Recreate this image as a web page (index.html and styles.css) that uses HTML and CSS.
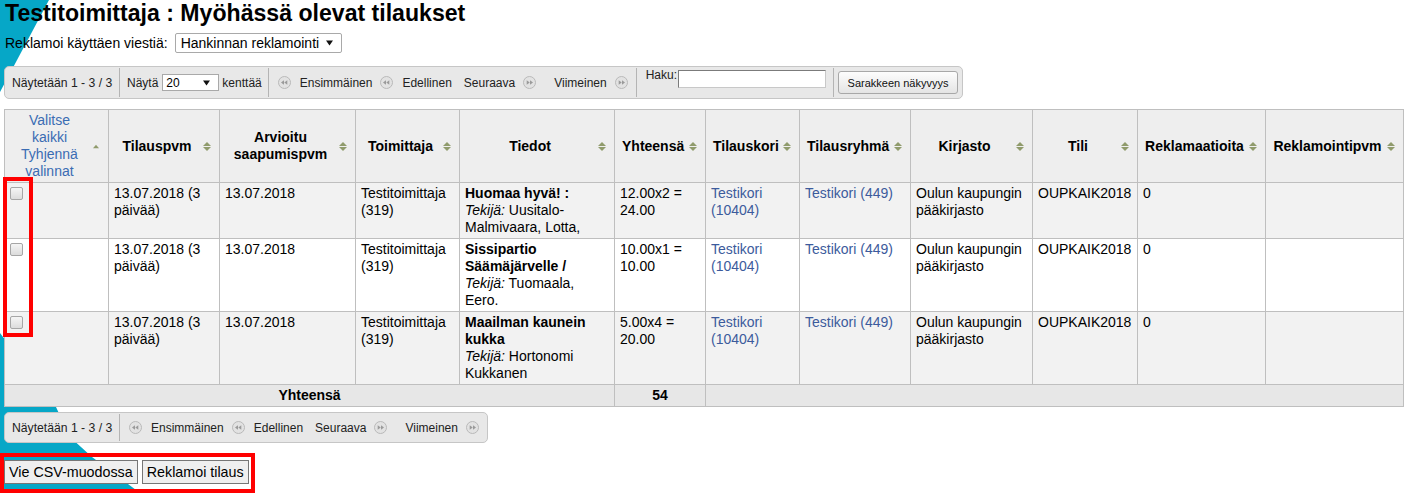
FILE: index.html
```html
<!DOCTYPE html>
<html lang="fi">
<head>
<meta charset="utf-8">
<title>Testitoimittaja : Myöhässä olevat tilaukset</title>
<link rel="stylesheet" href="styles.css">
</head>
<body>
<div class="bg-shape bg-top"></div>
<div class="bg-shape bg-bottom"></div>

<main class="page">
  <h1 class="title">Testitoimittaja : Myöhässä olevat tilaukset</h1>

  <div class="claim-row">
    <span class="claim-label">Reklamoi käyttäen viestiä:</span>
    <div class="select select-letter"><span>Hankinnan reklamointi</span><svg class="caret" width="7" height="6" viewBox="0 0 7 6"><path d="M0 .5h7L3.5 5.5z"/></svg></div>
  </div>

  <div class="toolbar toolbar-top">
    <div class="tb-section tb-info">Näytetään 1 - 3 / 3</div>
    <div class="tb-section tb-length"><span>Näytä</span><div class="select select-len"><span>20</span><svg class="caret" width="7" height="6" viewBox="0 0 7 6"><path d="M0 .5h7L3.5 5.5z"/></svg></div><span>kenttää</span></div>
    <div class="tb-section tb-paginate">
      <span class="pg-btn pg-first"><svg class="pg-ico" width="13" height="13" viewBox="0 0 13 13"><circle class="pg-c" cx="6.5" cy="6.5" r="6"/><path class="pg-a" d="M3 6.5 6 4.3v4.4z M6.3 6.5 9.3 4.3v4.4z"/></svg><span>Ensimmäinen</span></span>
      <span class="pg-btn pg-prev"><svg class="pg-ico" width="13" height="13" viewBox="0 0 13 13"><circle class="pg-c" cx="6.5" cy="6.5" r="6"/><path class="pg-a" d="M3 6.5 6 4.3v4.4z M6.3 6.5 9.3 4.3v4.4z"/></svg><span>Edellinen</span></span>
      <span class="pg-btn pg-next"><span>Seuraava</span><svg class="pg-ico" width="13" height="13" viewBox="0 0 13 13"><circle class="pg-c" cx="6.5" cy="6.5" r="6"/><path class="pg-a" d="M10 6.5 7 4.3v4.4z M6.7 6.5 3.7 4.3v4.4z"/></svg></span>
      <span class="pg-btn pg-last"><span>Viimeinen</span><svg class="pg-ico" width="13" height="13" viewBox="0 0 13 13"><circle class="pg-c" cx="6.5" cy="6.5" r="6"/><path class="pg-a" d="M10 6.5 7 4.3v4.4z M6.7 6.5 3.7 4.3v4.4z"/></svg></span>
    </div>
    <div class="tb-section tb-filter"><label class="search-label" for="haku">Haku:</label><input id="haku" class="search" type="text"></div>
    <div class="tb-section tb-colvis"><button class="colvis-btn" type="button">Sarakkeen näkyvyys</button></div>
  </div>

  <table class="orders">
    <colgroup>
      <col class="c1"><col class="c2"><col class="c3"><col class="c4"><col class="c5"><col class="c6">
      <col class="c7"><col class="c8"><col class="c9"><col class="c10"><col class="c11"><col class="c12">
    </colgroup>
    <thead>
      <tr>
        <th><div class="th-in"><span class="th-txt th-links"><a href="#">Valitse kaikki</a><br><a href="#">Tyhjennä valinnat</a></span><svg class="sort" width="8" height="9" viewBox="0 0 8 9"><path d="M1 6.2 4 2.8 7 6.2z"/></svg></div></th>
        <th><div class="th-in"><span class="th-txt">Tilauspvm</span><svg class="sort" width="8" height="9" viewBox="0 0 8 9"><path d="M0 4 4 0 8 4z M0 5h8L4 9z"/></svg></div></th>
        <th><div class="th-in"><span class="th-txt">Arvioitu saapumispvm</span><svg class="sort" width="8" height="9" viewBox="0 0 8 9"><path d="M0 4 4 0 8 4z M0 5h8L4 9z"/></svg></div></th>
        <th><div class="th-in"><span class="th-txt">Toimittaja</span><svg class="sort" width="8" height="9" viewBox="0 0 8 9"><path d="M0 4 4 0 8 4z M0 5h8L4 9z"/></svg></div></th>
        <th><div class="th-in"><span class="th-txt">Tiedot</span><svg class="sort" width="8" height="9" viewBox="0 0 8 9"><path d="M0 4 4 0 8 4z M0 5h8L4 9z"/></svg></div></th>
        <th><div class="th-in"><span class="th-txt">Yhteensä</span><svg class="sort" width="8" height="9" viewBox="0 0 8 9"><path d="M0 4 4 0 8 4z M0 5h8L4 9z"/></svg></div></th>
        <th><div class="th-in"><span class="th-txt">Tilauskori</span><svg class="sort" width="8" height="9" viewBox="0 0 8 9"><path d="M0 4 4 0 8 4z M0 5h8L4 9z"/></svg></div></th>
        <th><div class="th-in"><span class="th-txt">Tilausryhmä</span><svg class="sort" width="8" height="9" viewBox="0 0 8 9"><path d="M0 4 4 0 8 4z M0 5h8L4 9z"/></svg></div></th>
        <th><div class="th-in"><span class="th-txt">Kirjasto</span><svg class="sort" width="8" height="9" viewBox="0 0 8 9"><path d="M0 4 4 0 8 4z M0 5h8L4 9z"/></svg></div></th>
        <th><div class="th-in"><span class="th-txt">Tili</span><svg class="sort" width="8" height="9" viewBox="0 0 8 9"><path d="M0 4 4 0 8 4z M0 5h8L4 9z"/></svg></div></th>
        <th><div class="th-in"><span class="th-txt">Reklamaatioita</span><svg class="sort" width="8" height="9" viewBox="0 0 8 9"><path d="M0 4 4 0 8 4z M0 5h8L4 9z"/></svg></div></th>
        <th><div class="th-in"><span class="th-txt">Reklamointipvm</span><svg class="sort" width="8" height="9" viewBox="0 0 8 9"><path d="M0 4 4 0 8 4z M0 5h8L4 9z"/></svg></div></th>
      </tr>
    </thead>
    <tbody>
      <tr>
        <td><input class="chk" type="checkbox"></td>
        <td>13.07.2018 (3 päivää)</td>
        <td>13.07.2018</td>
        <td>Testitoimittaja (319)</td>
        <td><b>Huomaa hyvä! :</b><br><i>Tekijä:</i> Uusitalo-Malmivaara, Lotta,</td>
        <td>12.00x2 = 24.00</td>
        <td><a href="#">Testikori (10404)</a></td>
        <td><a href="#">Testikori (449)</a></td>
        <td>Oulun kaupungin pääkirjasto</td>
        <td class="nowrap">OUPKAIK2018</td>
        <td>0</td>
        <td></td>
      </tr>
      <tr>
        <td><input class="chk" type="checkbox"></td>
        <td>13.07.2018 (3 päivää)</td>
        <td>13.07.2018</td>
        <td>Testitoimittaja (319)</td>
        <td><b>Sissipartio Säämäjärvelle /</b><br><i>Tekijä:</i> Tuomaala, Eero.</td>
        <td>10.00x1 = 10.00</td>
        <td><a href="#">Testikori (10404)</a></td>
        <td><a href="#">Testikori (449)</a></td>
        <td>Oulun kaupungin pääkirjasto</td>
        <td class="nowrap">OUPKAIK2018</td>
        <td>0</td>
        <td></td>
      </tr>
      <tr>
        <td><input class="chk" type="checkbox"></td>
        <td>13.07.2018 (3 päivää)</td>
        <td>13.07.2018</td>
        <td>Testitoimittaja (319)</td>
        <td><b>Maailman kaunein kukka</b><br><i>Tekijä:</i> Hortonomi Kukkanen</td>
        <td>5.00x4 = 20.00</td>
        <td><a href="#">Testikori (10404)</a></td>
        <td><a href="#">Testikori (449)</a></td>
        <td>Oulun kaupungin pääkirjasto</td>
        <td class="nowrap">OUPKAIK2018</td>
        <td>0</td>
        <td></td>
      </tr>
    </tbody>
    <tfoot>
      <tr>
        <th colspan="5" class="tf-center">Yhteensä</th>
        <th class="tf-center">54</th>
        <td colspan="6"></td>
      </tr>
    </tfoot>
  </table>

  <div class="toolbar toolbar-bottom">
    <div class="tb-section tb-info">Näytetään 1 - 3 / 3</div>
    <div class="tb-section tb-paginate">
      <span class="pg-btn pg-first"><svg class="pg-ico" width="13" height="13" viewBox="0 0 13 13"><circle class="pg-c" cx="6.5" cy="6.5" r="6"/><path class="pg-a" d="M3 6.5 6 4.3v4.4z M6.3 6.5 9.3 4.3v4.4z"/></svg><span>Ensimmäinen</span></span>
      <span class="pg-btn pg-prev"><svg class="pg-ico" width="13" height="13" viewBox="0 0 13 13"><circle class="pg-c" cx="6.5" cy="6.5" r="6"/><path class="pg-a" d="M3 6.5 6 4.3v4.4z M6.3 6.5 9.3 4.3v4.4z"/></svg><span>Edellinen</span></span>
      <span class="pg-btn pg-next"><span>Seuraava</span><svg class="pg-ico" width="13" height="13" viewBox="0 0 13 13"><circle class="pg-c" cx="6.5" cy="6.5" r="6"/><path class="pg-a" d="M10 6.5 7 4.3v4.4z M6.7 6.5 3.7 4.3v4.4z"/></svg></span>
      <span class="pg-btn pg-last"><span>Viimeinen</span><svg class="pg-ico" width="13" height="13" viewBox="0 0 13 13"><circle class="pg-c" cx="6.5" cy="6.5" r="6"/><path class="pg-a" d="M10 6.5 7 4.3v4.4z M6.7 6.5 3.7 4.3v4.4z"/></svg></span>
    </div>
  </div>

  <div class="actions">
    <button class="action-btn" type="button">Vie CSV-muodossa</button>
    <button class="action-btn" type="button">Reklamoi tilaus</button>
  </div>
</main>

<div class="annot annot-checks"></div>
<div class="annot annot-actions"></div>
</body>
</html>
```

FILE: styles.css
```css
* { box-sizing: border-box; }

html, body {
  margin: 0;
  padding: 0;
  overflow: hidden;
}

body {
  position: relative;
  min-height: 493px;
  font-family: "Liberation Sans", Arial, sans-serif;
  font-size: 14px;
  color: #000;
  background: #fff;
}

/* decorative background shapes */
.bg-shape {
  position: absolute;
  left: 0;
  z-index: 0;
  background: #06a7c7;
}
.bg-top {
  top: 0;
  width: 49px;
  height: 92px;
  clip-path: polygon(0 0, 100% 0, 0 100%);
}
.bg-bottom {
  top: 333px;
  width: 140px;
  height: 160px;
  clip-path: polygon(0 0, 56px 74px, 70px 104px, 92px 124px, 140px 160px, 0 160px);
}

.page {
  position: relative;
  z-index: 1;
  padding: 0 4px;
}

.title {
  margin: 0;
  padding-left: 1px;
  font-size: 23.1px;
  line-height: 26px;
  font-weight: bold;
}

.claim-row {
  display: flex;
  align-items: center;
  height: 20px;
  margin-top: 7px;
  padding-left: 1px;
}

.select {
  display: inline-flex;
  align-items: center;
  justify-content: space-between;
  background: #fff;
  border: 1px solid #a9a9a9;
  color: #000;
}
.caret { fill: #111; flex: none; }

.select-letter {
  width: 167px;
  height: 20px;
  margin-left: 7px;
  padding: 0 8px 0 5px;
  border-radius: 2px;
  font-size: 14px;
}

/* toolbars */
.toolbar {
  display: flex;
  align-items: stretch;
  width: max-content;
  background: #e8e8e8;
  border: 1px solid #c6c6c6;
  border-radius: 5px;
  font-size: 12px;
  color: #222;
}
.toolbar-top { margin-top: 13px; height: 33px; }
.toolbar-bottom { margin-top: 5px; height: 31px; }

.tb-section {
  display: flex;
  align-items: center;
  white-space: nowrap;
}
.tb-section + .tb-section {
  border-left: 1px solid #b4b4b4;
  margin: 1px 0;
}

.tb-info {
  width: 114px;
  font-size: 12.2px;
  padding: 0 0 0 7px;
  overflow: hidden;
}
.tb-length { padding: 0 6px 0 7px; }

.select-len {
  width: 57px;
  height: 17px;
  margin: 0 3px 0 4px;
  padding: 0 8px 0 3px;
  font-size: 12px;
}

.tb-paginate { padding: 0 8px 0 9px; }
.pg-btn { display: flex; align-items: center; gap: 9px; color: #222; }
.pg-first { margin-right: 8px; }
.pg-prev { margin-right: 12px; }
.pg-next { margin-right: 18px; gap: 8px; }
.pg-last { gap: 8px; }
.pg-ico { flex: none; display: block; }
.pg-c { fill: #e2e2e2; stroke: #b9b9b9; stroke-width: 1; }
.pg-a { fill: #9a9a9a; }

.tb-filter {
  padding: 0 7px 0 9px;
  align-items: flex-start;
}
.search-label { line-height: 14px; margin-top: 0; }
.search {
  width: 148px;
  height: 18px;
  margin: 2px 0 0 1px;
  padding: 0 2px;
  border: 1px solid;
  border-color: #7b7b7b #c8c8c8 #c8c8c8 #7b7b7b;
  background: #fff;
  font: 12px "Liberation Sans", Arial, sans-serif;
}

.tb-colvis { padding: 0 4px; }
.colvis-btn {
  width: 120px;
  height: 23px;
  padding: 0;
  font: 11px "Liberation Sans", Arial, sans-serif;
  color: #111;
  border: 1px solid #a8a8a8;
  border-radius: 3px;
  background: linear-gradient(#fdfdfd, #e4e4e4);
}

/* table */
.orders {
  margin-top: 10px;
  border-collapse: collapse;
  table-layout: fixed;
  width: 1399px;
}
.c1 { width: 104px; }
.c2 { width: 111px; }
.c3 { width: 136px; }
.c4 { width: 104px; }
.c5 { width: 155px; }
.c6 { width: 91px; }
.c7 { width: 94px; }
.c8 { width: 111px; }
.c9 { width: 122px; }
.c10 { width: 105px; }
.c11 { width: 128px; }
.c12 { width: 138px; }

.orders th,
.orders td {
  border: 1px solid #bfbfbf;
  padding: 2px 5px;
  line-height: 17px;
  vertical-align: top;
  text-align: left;
  font-size: 14px;
}
.orders thead th {
  background: #eeeeee;
  vertical-align: middle;
  padding: 2px 8px 2px 7px;
}
.th-in {
  display: flex;
  align-items: center;
  gap: 5px;
}
.th-txt {
  flex: 1;
  min-width: 0;
  text-align: center;
  font-weight: bold;
}
.th-links { font-weight: normal; }
.th-links a { color: #3a6cb3; text-decoration: none; }
.sort { flex: none; display: block; fill: #909b6c; }

.orders tbody tr:nth-child(odd) td { background: #f2f2f2; }
.orders tbody tr:nth-child(even) td { background: #fff; }
.orders tbody a { color: #3c5b9c; text-decoration: none; }
.nowrap { white-space: nowrap; }

.chk {
  -webkit-appearance: none;
  appearance: none;
  display: block;
  width: 13px;
  height: 13px;
  margin: 2px 0 0 0;
  border: 1px solid #a6a6a6;
  border-radius: 2px;
  background: linear-gradient(#f5f5f5, #dcdcdc);
}

.orders tfoot th,
.orders tfoot td { background: #e7e7e7; }
.orders tfoot .tf-center { text-align: center; font-weight: bold; }

/* actions */
.actions {
  display: flex;
  gap: 4px;
  margin-top: 17px;
}
.action-btn {
  height: 24px;
  padding: 0 4px;
  font: 14.3px "Liberation Sans", Arial, sans-serif;
  color: #000;
  border: 1px solid #767676;
  border-radius: 0;
  background: #efefef;
}

/* red annotation boxes drawn over the screenshot */
.annot {
  position: absolute;
  z-index: 2;
  border: 4px solid #ff0000;
  pointer-events: none;
}
.annot-checks { left: 3px; top: 177px; width: 30px; height: 160px; }
.annot-actions { left: 0; top: 453px; width: 255px; height: 40px; }
```
